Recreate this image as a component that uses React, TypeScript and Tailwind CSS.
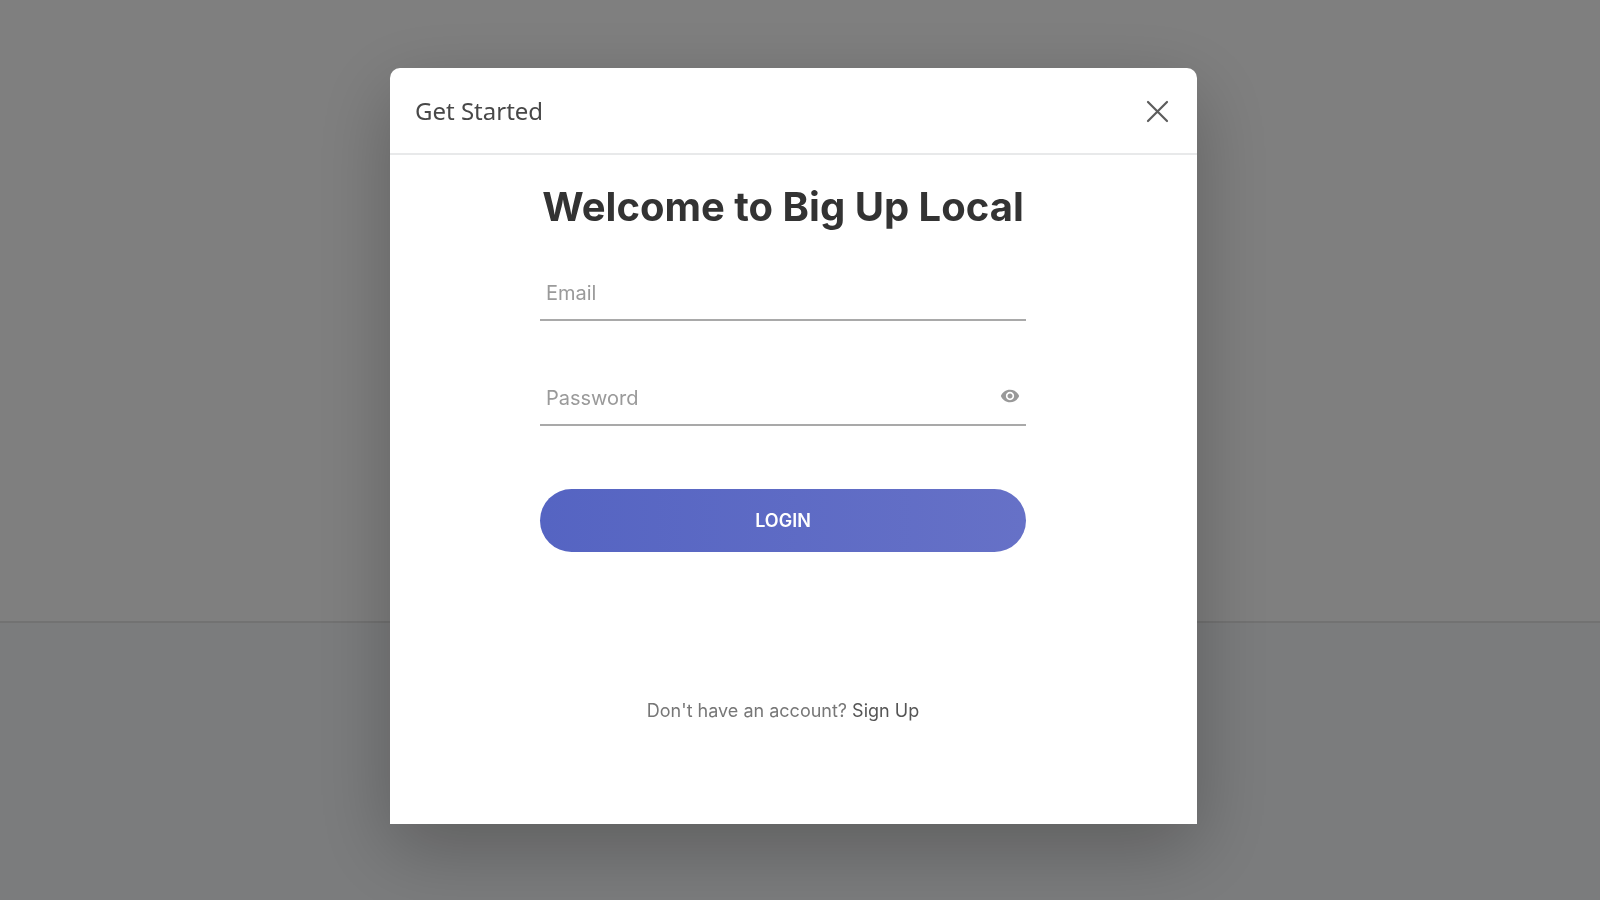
import { useState } from 'react';
import type { FormEvent } from 'react';
import { MdVisibility } from 'react-icons/md';

const inputClass =
  'w-full h-[54px] border-b-2 border-[#a9a9a9] bg-transparent px-1.5 text-xl text-[#333] placeholder:text-[#9a9a9a] outline-none';

interface LoginModalProps {
  onClose: () => void;
}

function LoginModal({ onClose }: LoginModalProps) {
  const [showPassword, setShowPassword] = useState(false);

  const handleSubmit = (e: FormEvent) => {
    e.preventDefault();
  };

  return (
    <div
      role="dialog"
      aria-modal="true"
      aria-labelledby="modal-title"
      className="w-full max-w-[807px] rounded-t-[10px] bg-white shadow-[0_24px_76px_rgba(0,0,0,0.25)]"
    >
      {/* Header */}
      <div className="flex items-center justify-between border-b-2 border-[#e8e9ea] pt-[25px] pb-6 pl-[25px] pr-7">
        <h2 id="modal-title" className="font-['Noto_Sans','Open_Sans',sans-serif] text-2xl leading-9 text-[#484848]">
          Get Started
        </h2>
        <button type="button" aria-label="Close" onClick={onClose} className="cursor-pointer text-[#5c5c5c]">
          <svg width="23" height="23" viewBox="0 0 23 23" fill="none" stroke="currentColor" strokeWidth="2.2" strokeLinecap="round">
            <path d="M2 2l19 19M21 2L2 21" />
          </svg>
        </button>
      </div>

      {/* Body */}
      <div className="pr-[21px] pb-[99px] pt-6">
        <form onSubmit={handleSubmit} className="mx-auto w-full max-w-[486px]">
          <h1 className="whitespace-nowrap text-center text-[40px] leading-[56px] font-bold text-[#333]">
            Welcome to Big Up Local
          </h1>

          <div className="mt-8">
            <input type="email" aria-label="Email" placeholder="Email" className={inputClass} />
          </div>

          <div className="relative mt-[51px]">
            <input
              type={showPassword ? 'text' : 'password'}
              aria-label="Password"
              placeholder="Password"
              className={inputClass}
            />
            <button
              type="button"
              aria-label="Show password"
              onClick={() => setShowPassword(!showPassword)}
              className="absolute right-1.5 top-3.5 cursor-pointer text-[#999]"
            >
              <MdVisibility size={20} />
            </button>
          </div>

          <button
            type="submit"
            className="mt-[63px] h-[63px] w-full cursor-pointer rounded-full bg-linear-to-r from-[#5564c2] to-[#6671c7] text-lg font-semibold text-white"
          >
            LOGIN
          </button>

          <p className="mt-[145px] text-center text-lg text-[#777]">
            Don't have an account?{' '}
            <a href="#" className="text-[#555]">
              Sign Up
            </a>
          </p>
        </form>
      </div>
    </div>
  );
}

export default function App() {
  const [open, setOpen] = useState(true);

  return (
    <div className="flex min-h-screen flex-col bg-white font-['Inter',sans-serif]">
      <main className="flex-1" />
      <footer className="h-[279px] border-t-2 border-[#e5e5e5] bg-[#f7f9fb]" />

      {open && (
        <div className="fixed inset-0 flex items-start justify-center overflow-hidden bg-black/50 pr-[13px] pt-[68px]">
          <LoginModal onClose={() => setOpen(false)} />
        </div>
      )}
    </div>
  );
}
